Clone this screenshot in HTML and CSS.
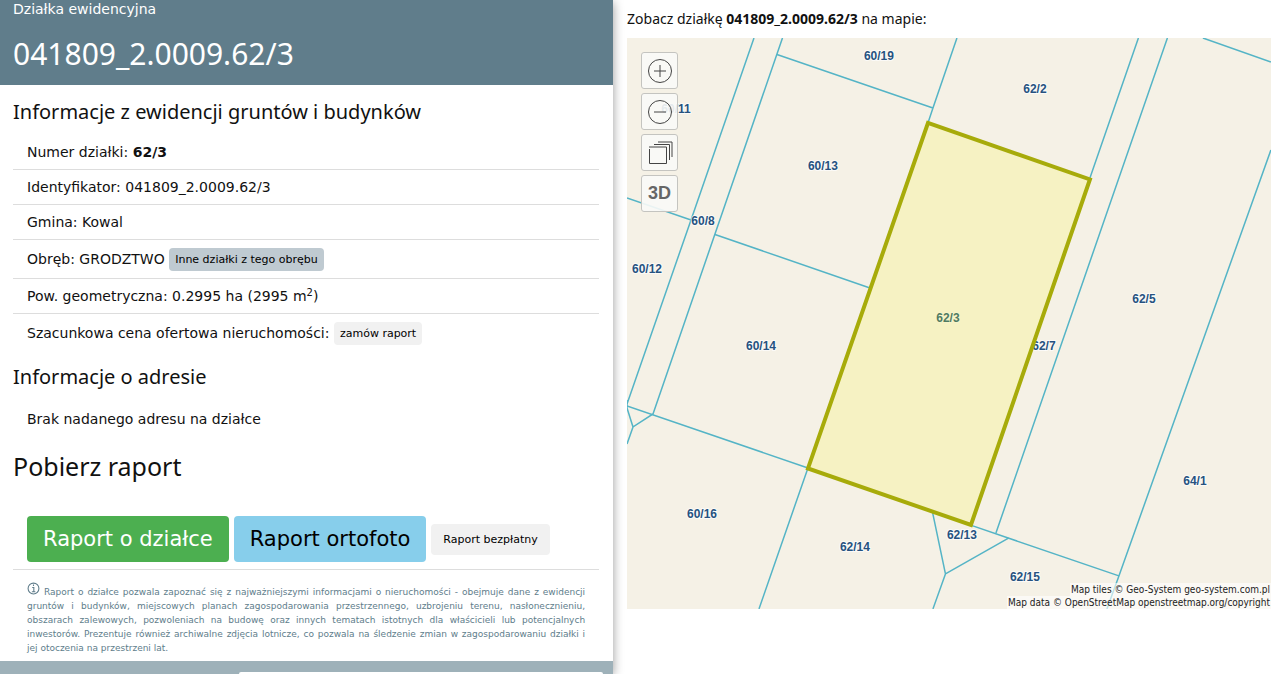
FILE: index.html
```html
<!DOCTYPE html>
<html lang="pl">
<head>
<meta charset="utf-8">
<title>Działka 041809_2.0009.62/3</title>
<meta name="viewport" content="width=device-width, initial-scale=1">
<link rel="stylesheet" href="styles.css">
</head>
<body>
<div class="page">
  <main class="panel">
    <header class="panel-head">
      <p class="kicker">Działka ewidencyjna</p>
      <h1>041809_2.0009.62/3</h1>
    </header>
    <div class="panel-body">
      <h3>Informacje z ewidencji gruntów i budynków</h3>
      <ul class="facts">
        <li>Numer działki: <b>62/3</b></li>
        <li>Identyfikator: 041809_2.0009.62/3</li>
        <li>Gmina: Kowal</li>
        <li class="with-button">Obręb: GRODZTWO <button class="btn small slate" type="button">Inne działki z tego obrębu</button></li>
        <li>Pow. geometryczna: 0.2995 ha (2995 m<sup>2</sup>)</li>
        <li class="with-button">Szacunkowa cena ofertowa nieruchomości: <button class="btn small" type="button">zamów raport</button></li>
      </ul>
      <h3>Informacje o adresie</h3>
      <p class="address">Brak nadanego adresu na działce</p>
      <h2>Pobierz raport</h2>
      <div class="reports">
        <button class="btn large green" type="button">Raport o działce</button>
        <button class="btn large sky" type="button">Raport ortofoto</button>
        <button class="btn medium" type="button">Raport bezpłatny</button>
      </div>
      <p class="note"><svg class="info" viewBox="0 0 12 12" aria-hidden="true"><circle cx="6" cy="6" r="5"/><path d="M6 2.2v1.6M4.800 5H6.300V9M4.500 9h3.200"/></svg> Raport o działce pozwala zapoznać się z najważniejszymi informacjami o nieruchomości - obejmuje dane z ewidencji gruntów i budynków, miejscowych planach zagospodarowania przestrzennego, uzbrojeniu terenu, nasłonecznieniu, obszarach zalewowych, pozwoleniach na budowę oraz innych tematach istotnych dla właścicieli lub potencjalnych inwestorów. Prezentuje również archiwalne zdjęcia lotnicze, co pozwala na śledzenie zmian w zagospodarowaniu działki i jej otoczenia na przestrzeni lat.</p>
    </div>
    <div class="panel-foot"><div class="foot-card"></div></div>
  </main>
  <aside class="map-side">
    <p class="map-title">Zobacz działkę <b>041809_2.0009.62/3</b> na mapie:</p>
    <div class="map">
      <svg class="map-canvas" viewBox="627 38 644 571" role="img" aria-label="Mapa działki 62/3">
        <g class="borders">
          <path d="M754 38L691 220L627 404"/>
          <path d="M782.500 38L653 414L633 427L627 444M627 400V408L633 427"/>
          <path d="M777 54.500L933 108L957 38M933 108L928 123"/>
          <path d="M627 198L691 220M715 234.500L870 288"/>
          <path d="M627 406L808 468L759 609"/>
          <path d="M1138.500 38L1090 178M1167.500 38L996 533"/>
          <path d="M1203 38L1271 62M1271 150L1119 576L1107 609"/>
          <path d="M970 525L1119 576M932.500 512L945.500 574L1009 538M945.500 574L933 609"/>
        </g>
        <g class="names">
          <text x="879" y="60">60/19</text><text x="1035" y="93">62/2</text>
          <text x="676" y="113">60/11</text><text x="823" y="170">60/13</text>
          <text x="703" y="225">60/8</text><text x="647" y="273">60/12</text>
          <text x="761" y="350">60/14</text><text x="1144" y="303">62/5</text>
          <text x="1044" y="350">62/7</text><text x="702" y="518">60/16</text>
          <text x="855" y="551">62/14</text><text x="962" y="539">62/13</text>
          <text x="1025" y="581">62/15</text><text x="1195" y="485">64/1</text>
        </g>
        <path class="parcel" d="M928 123L1090 179.500L971 525L808 468.500Z"/>
        <text class="names current" x="948" y="322">62/3</text>
      </svg>
      <div class="map-tools">
        <button type="button" aria-label="Powiększ"><svg viewBox="0 0 26 26"><circle cx="13" cy="13" r="11.500"/><path d="M13 7v12M7 13h12"/></svg></button>
        <button type="button" aria-label="Pomniejsz"><svg viewBox="0 0 26 26"><circle cx="13" cy="13" r="11.500"/><path d="M7 13h12"/></svg></button>
        <button type="button" aria-label="Warstwy"><svg viewBox="0 0 26 26"><path d="M2.500 9v14.500h17V7H2M7 4.500h15.500V20M11 2h14v15"/></svg></button>
        <button type="button" class="three-d">3D</button>
      </div>
      <div class="credits"><span>Map tiles © Geo-System geo-system.com.pl</span><span>Map data © OpenStreetMap openstreetmap.org/copyright</span></div>
    </div>
  </aside>
</div>
</body>
</html>
```
FILE: styles.css
```css
* { box-sizing: border-box; }
body {
  margin: 0;
  background: #fff;
  color: #111;
  font: 14px/20px "DejaVu Sans", sans-serif;
}
h1, h2, h3, p, ul { margin: 0; padding: 0; }
h1, h2, h3 { font-family: "Noto Sans", "Open Sans", sans-serif; font-weight: 400; }
.page { display: flex; min-height: 100vh; }

.panel {
  display: flex;
  flex: 0 0 47.9%;
  flex-direction: column;
  background: #fff;
  box-shadow: 0 2px 10px rgba(0, 0, 0, .4);
}
.panel-head { padding: 0 14px 9px 13px; background: #607d8b; color: #fff; }
.kicker { line-height: 19px; }
h1 { padding-top: 12px; font-size: 30px; line-height: 45px; }
h3 { font-size: 20px; line-height: 30px; }
h2 { font-size: 25px; line-height: 36px; }
.panel-body { padding: 12px 14px 6px 13px; }

.facts { list-style: none; margin: 8px 0 10px; }
.facts li { padding: 7px 14px; border-bottom: 1px solid #ddd; }
.facts li.with-button { padding: 8px 14px 7px; }
.facts li:last-child { border-bottom: 0; }
sup { font-size: 10px; line-height: 0; vertical-align: 5px; }

.btn {
  border: 0;
  border-radius: 4px;
  background: #f1f1f1;
  color: #000;
  font-family: "DejaVu Sans", sans-serif;
  vertical-align: middle;
}
.small { padding: 0 6px; font-size: 11px; line-height: 23px; }
.medium { padding: 0 12px; font-size: 11px; line-height: 31px; }
.large { padding: 0 16px; font-size: 21px; line-height: 46px; }
.slate { background: #bfcad1; }
.green { background: #4caf50; color: #fff; }
.sky { background: #87ceeb; }

.address { padding: 17px 14px 10px; }
.address + h2 { margin-top: 9px; }
.reports {
  display: flex;
  align-items: center;
  gap: 5px;
  margin-top: 32px;
  padding: 0 14px 7px;
  border-bottom: 1px solid #ddd;
}
.note {
  padding: 12px 14px 0;
  color: #607d8b;
  font-size: 9px;
  line-height: 14px;
  text-align: justify;
}
.info { width: 13px; height: 13px; fill: none; stroke: #607d8b; }
.panel-foot {
  display: flex;
  flex: 1;
  padding: 11px 10px 0 39%;
  background: #9eb1b9;
}
.foot-card { flex: 1; border-radius: 6px 6px 0 0; background: #fff; }

.map-side { flex: 1; min-width: 0; padding: 9px 9px 0 14px; }
.map-title { font: 14px/20px "Noto Sans", "Open Sans", sans-serif; }
.map { position: relative; margin-top: 9px; background: #f5f1e6; }
.map-canvas { display: block; width: 100%; }
.borders { fill: none; stroke: #54b4c6; stroke-width: 1.5; }
.names {
  fill: #265280;
  stroke: #fff;
  stroke-width: 2px;
  stroke-opacity: .7;
  paint-order: stroke;
  font: bold 12px "Liberation Sans", sans-serif;
  text-anchor: middle;
}
.current { fill: #4f7b62; stroke: #f8f5cc; }
.parcel { fill: rgba(247, 244, 160, .5); stroke: #a7ab0a; stroke-width: 4; }
.map-tools {
  position: absolute;
  top: 14px;
  left: 14px;
  display: flex;
  flex-direction: column;
  gap: 4px;
}
.map-tools button {
  display: grid;
  place-items: center;
  width: 37px;
  height: 37px;
  padding: 0;
  border: 1px solid #c4c4c0;
  border-radius: 3px;
  background: rgba(249, 249, 247, .9);
  color: #666;
}
.map-tools svg { width: 26px; height: 26px; fill: none; stroke: #444; }
.map-tools .three-d { font: bold 18px "Liberation Sans", sans-serif; }
.credits {
  position: absolute;
  right: 0;
  bottom: 0;
  display: flex;
  flex-direction: column;
  align-items: flex-end;
  color: #222;
  font: 10px/13px "DejaVu Sans Condensed", "DejaVu Sans", sans-serif;
}
.credits span { padding: 0 1px; background: rgba(255, 255, 255, .6); }
```
